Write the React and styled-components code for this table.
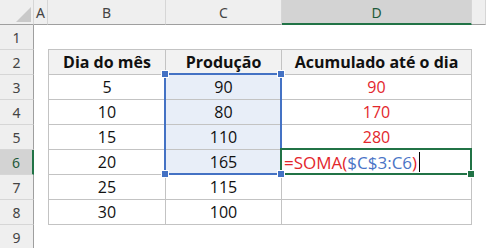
import React from 'react';
import styled, { createGlobalStyle } from 'styled-components';

const GlobalStyle = createGlobalStyle`
  html, body {
    margin: 0;
    padding: 0;
    background: #ffffff;
    overflow: hidden;
  }
`;

const Sheet = styled.div`
  position: relative;
  display: grid;
  grid-template-columns: 34px 14px 118px 116px 190px 1fr;
  grid-template-rows: repeat(10, 25px);
  width: 486px;
  height: 248px;
  overflow: hidden;
  font-family: "Open Sans", "Noto Sans", sans-serif;
  font-size: 16px;
  color: #111;
`;

const Corner = styled.div`
  box-sizing: border-box;
  background: #efefef;
  border-right: 1px solid #d6d6d6;
  border-bottom: 1px solid #9f9f9f;
  display: flex;
  align-items: flex-end;
  justify-content: flex-end;
  padding: 0 2px 2px 0;
`;

const ColHead = styled.div`
  box-sizing: border-box;
  display: flex;
  align-items: center;
  justify-content: center;
  background: ${p => (p.$active ? '#d3d3d3' : '#efefef')};
  border-right: 1px solid #d6d6d6;
  border-bottom: ${p => (p.$active ? '2px solid #217346' : '1px solid #9f9f9f')};
  color: ${p => (p.$active ? '#1e5a3a' : '#444')};
  font-family: "Noto Sans", "Open Sans", sans-serif;
  font-size: 14px;
  padding-top: ${p => (p.$active ? '1px' : '0')};
`;

const RowHead = styled.div`
  box-sizing: border-box;
  display: flex;
  align-items: center;
  justify-content: center;
  background: ${p => (p.$active ? '#d3d3d3' : '#efefef')};
  border-right: ${p => (p.$active ? '2px solid #217346' : '1px solid #9f9f9f')};
  border-bottom: 1px solid #d6d6d6;
  color: ${p => (p.$active ? '#1e5a3a' : '#444')};
  font-family: "Noto Sans", "Open Sans", sans-serif;
  font-size: 14px;
`;

const Cell = styled.div`
  box-sizing: border-box;
  display: flex;
  align-items: center;
  justify-content: ${p => (p.$left ? 'flex-start' : 'center')};
  padding-left: ${p => (p.$left ? '2px' : '0')};
  white-space: nowrap;
  background: ${p => (p.$head ? '#f2f2f2' : p.$picked ? '#e8eef8' : 'transparent')};
  font-weight: ${p => (p.$head ? 700 : 400)};
  color: ${p => (p.$red ? '#e3262c' : '#111')};
  border-right: ${p => (p.$boxed ? '1px solid #c3c3c3' : 'none')};
  border-bottom: ${p => (p.$boxed || p.$under ? '1px solid #c3c3c3' : 'none')};
  border-left: ${p => (p.$first ? '1px solid #c3c3c3' : 'none')};
`;

const Formula = styled.span`
  font-size: 17px;
`;

const Ref = styled.span`
  color: #4a74c6;
`;

const Caret = styled.span`
  display: inline-block;
  vertical-align: middle;
  width: 1px;
  height: 20px;
  background: #000;
  margin-left: 2px;
`;

const Range = styled.div`
  position: absolute;
  box-sizing: border-box;
  left: ${p => p.$x}px;
  top: ${p => p.$y}px;
  width: ${p => p.$w}px;
  height: ${p => p.$h}px;
  border: 2px solid ${p => p.$color};
  pointer-events: none;
`;

const Handle = styled.div`
  position: absolute;
  box-sizing: border-box;
  left: ${p => p.$x - 3}px;
  top: ${p => p.$y - 3}px;
  width: 6px;
  height: 6px;
  background: ${p => p.$color};
  outline: 1px solid #ffffff;
`;

const BLUE = '#4472c4';
const GREEN = '#217346';

const rows = [
  { n: 3, day: '5', prod: '90', acc: '90' },
  { n: 4, day: '10', prod: '80', acc: '170' },
  { n: 5, day: '15', prod: '110', acc: '280' },
  { n: 6, day: '20', prod: '165', formula: true },
  { n: 7, day: '25', prod: '115' },
  { n: 8, day: '30', prod: '100' },
];

export default function App() {
  return (
    <>
      <GlobalStyle />
      <Sheet>
        <Corner>
          <svg width="15" height="15" viewBox="0 0 15 15">
            <polygon points="15,0 15,15 0,15" fill="#c9c9c9" />
          </svg>
        </Corner>
        <ColHead>A</ColHead>
        <ColHead>B</ColHead>
        <ColHead>C</ColHead>
        <ColHead $active>D</ColHead>
        <ColHead />

        <RowHead>1</RowHead>
        <Cell />
        <Cell $under />
        <Cell $under />
        <Cell $under />
        <Cell />

        <RowHead>2</RowHead>
        <Cell />
        <Cell $boxed $first $head>Dia do mês</Cell>
        <Cell $boxed $head>Produção</Cell>
        <Cell $boxed $head>Acumulado até o dia</Cell>
        <Cell />

        {rows.map(r => (
          <React.Fragment key={r.n}>
            <RowHead $active={r.formula}>{r.n}</RowHead>
            <Cell />
            <Cell $boxed $first>{r.day}</Cell>
            <Cell $boxed $picked={r.n <= 6}>{r.prod}</Cell>
            {r.formula ? (
              <Cell $boxed $red $left>
                <Formula>=SOMA(<Ref>$C$3:C6</Ref>)</Formula>
                <Caret />
              </Cell>
            ) : (
              <Cell $boxed $red>{r.acc}</Cell>
            )}
            <Cell />
          </React.Fragment>
        ))}

        <RowHead>9</RowHead>
        <Cell />
        <Cell />
        <Cell />
        <Cell />
        <Cell />

        <Range $x={164} $y={73} $w={118} $h={102} $color={BLUE} />
        <Range $x={280} $y={148} $w={192} $h={27} $color={GREEN} />
        <Handle $x={165} $y={74} $color={BLUE} />
        <Handle $x={281} $y={74} $color={BLUE} />
        <Handle $x={165} $y={174} $color={BLUE} />
        <Handle $x={281} $y={174} $color={BLUE} />
        <Handle $x={471} $y={174} $color={GREEN} />
      </Sheet>
    </>
  );
}
